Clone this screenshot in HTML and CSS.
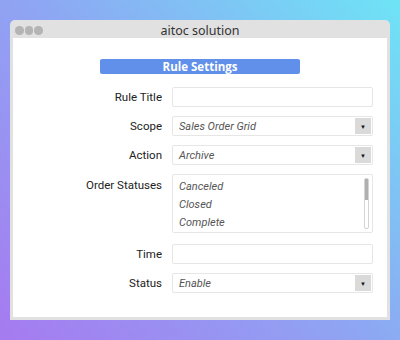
FILE: index.html
```html
<!DOCTYPE html>
<html lang="en">
<head>
    <meta charset="UTF-8">
    <meta name="viewport" content="width=device-width, initial-scale=1.0">
    <title>aitoc solution</title>
    <link rel="stylesheet" href="styles.css">
</head>
<body>
    <div class="window">
        <div class="titlebar">
            <div class="dots"><span></span><span></span><span></span></div>
            <div class="title">aitoc solution</div>
        </div>
        <div class="content">
            <div class="heading">Rule Settings</div>

            <div class="form">
                <label class="label">Rule Title</label>
                <div class="field"></div>

                <label class="label">Scope</label>
                <div class="field select">
                    <span class="value">Sales Order Grid</span>
                    <span class="arrow">&#9660;</span>
                </div>

                <label class="label">Action</label>
                <div class="field select">
                    <span class="value">Archive</span>
                    <span class="arrow">&#9660;</span>
                </div>

                <label class="label label-top">Order Statuses</label>
                <div class="field listbox">
                    <div class="option">Canceled</div>
                    <div class="option">Closed</div>
                    <div class="option">Complete</div>
                    <div class="scroll"><div class="thumb"></div></div>
                </div>

                <label class="label">Time</label>
                <div class="field"></div>

                <label class="label">Status</label>
                <div class="field select">
                    <span class="value">Enable</span>
                    <span class="arrow">&#9660;</span>
                </div>
            </div>
        </div>
    </div>
</body>
</html>
```

FILE: styles.css
```css
html, body {
    margin: 0;
    height: 100%;
}
body {
    background: linear-gradient(45deg, #a67af0 0%, #8ea6f3 50%, #6ee4f6 100%);
    font-family: Roboto, "Liberation Sans", sans-serif;
    overflow: hidden;
}
.window {
    margin: 20px 0 0 10px;
    width: 380px;
    height: 300px;
    box-sizing: border-box;
    background: #e1e1e1;
    border-radius: 5px 5px 0 0;
    padding: 0 3px 3px 3px;
    display: flex;
    flex-direction: column;
}
.titlebar {
    height: 18px;
    position: relative;
    display: flex;
    align-items: center;
    justify-content: center;
}
.dots {
    position: absolute;
    left: 2px;
    top: 6px;
    display: flex;
    gap: 1px;
}
.dots span {
    width: 8.5px;
    height: 8.5px;
    border-radius: 50%;
    background: #b4b4b4;
}
.title {
    font-family: "Noto Sans", "Open Sans", sans-serif;
    font-size: 12.5px;
    color: #333;
    margin-top: 2px;
}
.content {
    flex: 1;
    background: #fff;
    padding-top: 21px;
}
.heading {
    width: 200px;
    height: 15px;
    margin: 0 auto;
    background: #6090e9;
    border-radius: 2px;
    color: #fff;
    font-family: "Open Sans", "Noto Sans", sans-serif;
    font-weight: bold;
    font-size: 11.5px;
    line-height: 15px;
    text-align: center;
}
.form {
    display: grid;
    grid-template-columns: 149px 201px;
    column-gap: 10px;
    row-gap: 9px;
    margin-top: 13px;
    align-items: center;
}
.label {
    text-align: right;
    font-size: 11.5px;
    color: #222;
}
.label-top {
    align-self: start;
    margin-top: 4px;
}
.field {
    height: 20px;
    box-sizing: border-box;
    border: 1px solid #e6e6e6;
    border-radius: 2px;
    background: #fff;
}
.select {
    display: flex;
    align-items: center;
    justify-content: space-between;
    padding: 1px 1px 1px 6px;
}
.value, .option {
    font-style: italic;
    font-size: 11px;
    color: #555;
}
.arrow {
    width: 16px;
    height: 100%;
    background: #dadada;
    font-size: 6px;
    color: #111;
    display: flex;
    align-items: center;
    justify-content: center;
}
.listbox {
    height: 59px;
    position: relative;
    padding: 3px 6px;
    margin-bottom: 2px;
}
.option {
    line-height: 18px;
}
.scroll {
    position: absolute;
    right: 3px;
    top: 3px;
    bottom: 3px;
    width: 3px;
    border: 1px solid #d4d4d4;
    border-radius: 2px;
}
.thumb {
    height: 21px;
    background: #b0b0b0;
}
```
